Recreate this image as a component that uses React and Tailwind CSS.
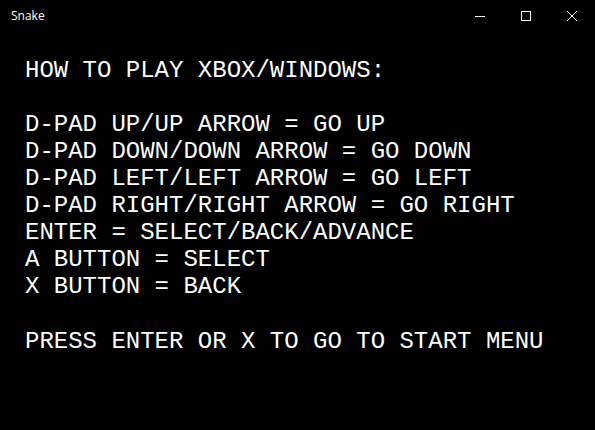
const lines = [
  "HOW TO PLAY XBOX/WINDOWS:",
  "",
  "D-PAD UP/UP ARROW = GO UP",
  "D-PAD DOWN/DOWN ARROW = GO DOWN",
  "D-PAD LEFT/LEFT ARROW = GO LEFT",
  "D-PAD RIGHT/RIGHT ARROW = GO RIGHT",
  "ENTER = SELECT/BACK/ADVANCE",
  "A BUTTON = SELECT",
  "X BUTTON = BACK",
  "",
  "PRESS ENTER OR X TO GO TO START MENU",
];

const TitleBar = () => (
  <div className="flex h-8 items-center bg-black text-white">
    <span className="flex-1 pl-[11px] text-xs font-['Open_Sans',sans-serif]">Snake</span>
    <div className="flex h-full">
      <div className="flex w-[46px] items-center justify-center">
        <svg width="10" height="10" viewBox="0 0 10 10">
          <path d="M0 5.5h10" stroke="white" strokeWidth="1" />
        </svg>
      </div>
      <div className="flex w-[46px] items-center justify-center">
        <svg width="10" height="10" viewBox="0 0 10 10">
          <rect x="0.5" y="0.5" width="9" height="9" fill="none" stroke="white" strokeWidth="1" />
        </svg>
      </div>
      <div className="flex w-[46px] items-center justify-center">
        <svg width="10" height="10" viewBox="0 0 10 10">
          <path d="M0 0L10 10M10 0L0 10" stroke="white" strokeWidth="1" />
        </svg>
      </div>
    </div>
  </div>
);

export default function App() {
  return (
    <div className="flex h-[430px] w-[595px] flex-col bg-black">
      <TitleBar />
      <div className="pl-[25px] pt-[25px] font-['Liberation_Mono','Courier_New',monospace] text-[24px] leading-[27px] text-white">
        {lines.map((line, i) => (
          <div key={i} className={i === 9 ? "h-[28px] whitespace-pre" : "h-[27px] whitespace-pre"}>
            {line}
          </div>
        ))}
      </div>
    </div>
  );
}
